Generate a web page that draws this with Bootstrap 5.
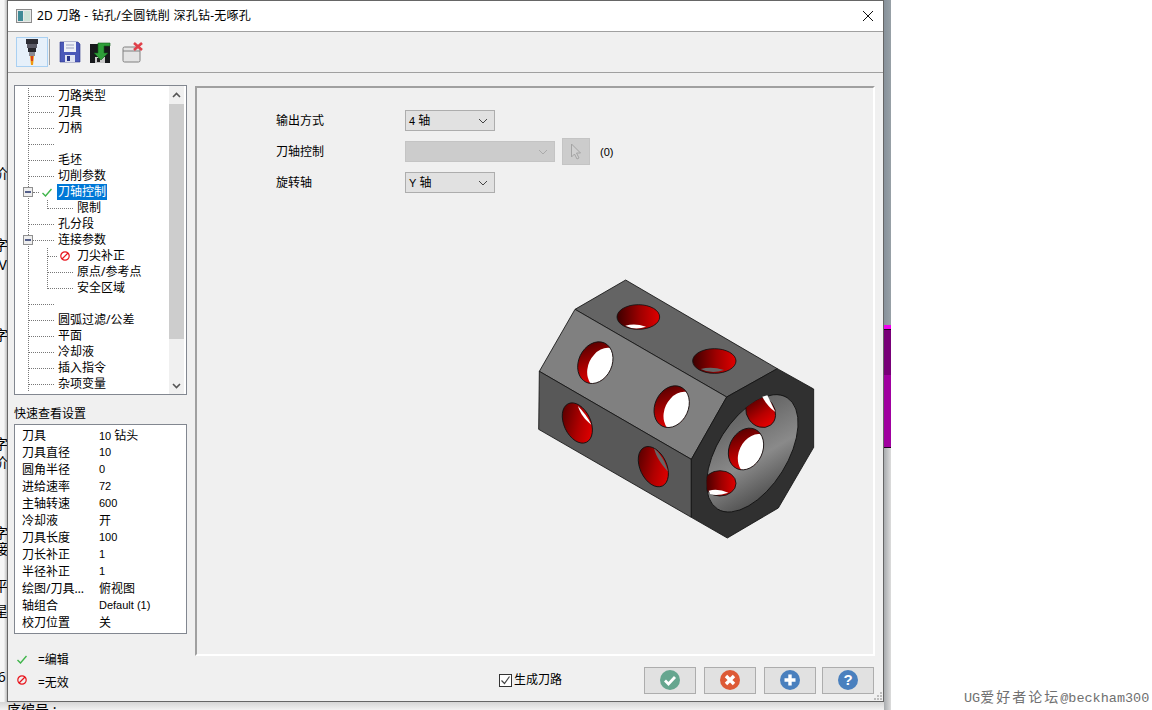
<!DOCTYPE html>
<html lang="zh">
<head>
  <meta charset="UTF-8"/>
  <meta name="viewport" content="width=device-width, initial-scale=1.0"/>
  <title>2D 刀路</title>
  <link href="https://cdn.jsdelivr.net/npm/bootstrap@5.3.0/dist/css/bootstrap.min.css" rel="stylesheet"/>
  <style>
    html, body { height: 710px; overflow: hidden; }
    body { background: #fff; font: 12px/16px "Noto Sans", "Noto Sans CJK SC", sans-serif; color: #000; position: relative; }
    .lat { font: 11px/16px "Liberation Sans", sans-serif; }

    /* desktop behind the dialog */
    .desk-left { position: absolute; left: 0; top: 0; width: 7px; height: 710px; background: linear-gradient(to right, #f6f6f6 55%, #bdbdbd); overflow: hidden; }
    .desk-left span { position: absolute; left: -6px; font-size: 14px; }
    .desk-bottom { position: absolute; left: 0; top: 702px; width: 891px; height: 8px; background: linear-gradient(#d6d6d6, #f2f2f2); overflow: hidden; }
    .desk-bottom span { position: absolute; left: 7px; top: 0; font-size: 14px; }
    .desk-right { position: absolute; left: 884px; top: 0; width: 7px; height: 710px; display: flex; flex-direction: column; }
    .strip-top { height: 325px; background: linear-gradient(to right, #87919a, #98a1a7); }
    .strip-a { height: 5px; background: #f000f0; border-bottom: 1px solid #200020; }
    .strip-b { height: 45px; background: #780078; }
    .strip-c { height: 73px; background: #a000a0; border-bottom: 1px solid #200020; }
    .strip-bot { flex: 1; background: linear-gradient(to right, #a8abae, #dcdcdc); }
    .watermark { position: absolute; left: 964px; top: 690px; font: 13.5px/16px "Liberation Mono", "Noto Sans CJK SC", monospace; color: #707070; white-space: nowrap; }
    .watermark span { font-size: 14px; letter-spacing: 2px; }

    /* dialog window */
    .dlg { position: absolute; left: 7px; top: 0; width: 877px; height: 702px; background: #f0f0f0; border: 1px solid #666; display: flex; flex-direction: column; }
    .dlg-title { height: 30px; background: #fff; padding-left: 8px; padding-right: 9px; flex: none; }
    .dlg-title-ico { margin-right: 5px; }
    .dlg-title-txt { letter-spacing: .25px; }
    .dlg-tools { height: 42px; flex: none; border-top: 1px solid #a0a0a0; border-bottom: 1px solid #a0a0a0; padding-left: 8px; }
    .tool-on { width: 32px; height: 30px; background: #e6f0fa; border: 1px solid #a9d0f2; }
    .tool-sep { width: 1px; height: 26px; background: #a0a0a0; margin-left: 1px; }
    .tool-save { margin-left: 9px; }
    .tool-load { margin-left: 8px; }
    .tool-del { margin-left: 9px; }
    .dlg-main { flex: 1; padding: 12px 9px 0 6px; gap: 8px; min-height: 0; }
    .side { width: 173px; flex: none; }

    .tree-box { height: 310px; border: 1px solid #828790; background: #fff; }
    .tree-list { flex: 1; padding-top: 2px; }
    .tree-row { height: 16px; padding-left: 13px; white-space: nowrap; background: linear-gradient(#777 50%, transparent 50%) 13px 0 / 1px 2px repeat-y; }
    .tree-box-row { padding-left: 8px; }
    .tree-sub { padding-left: 32px; }
    .sub-full { background: linear-gradient(#777 50%, transparent 50%) 13px 0 / 1px 2px repeat-y, linear-gradient(#777 50%, transparent 50%) 32px 0 / 1px 2px repeat-y; }
    .sub-half { background: linear-gradient(#777 50%, transparent 50%) 13px 0 / 1px 2px repeat-y, linear-gradient(#777 50%, transparent 50%) 32px 0 / 1px 2px no-repeat, linear-gradient(#777 50%, transparent 50%) 32px 2px / 1px 2px no-repeat, linear-gradient(#777 50%, transparent 50%) 32px 4px / 1px 2px no-repeat, linear-gradient(#777 50%, transparent 50%) 32px 6px / 1px 2px no-repeat; }
    .tree-dash { height: 0; flex: none; border-top: 1px dotted #777; }
    .dash-26 { width: 26px; margin-right: 4px; }
    .dash-sub { width: 26px; margin-right: 4px; }
    .dash-5 { width: 6px; margin-right: 3px; }
    .dash-21 { width: 21px; margin-right: 4px; }
    .dash-10 { width: 10px; margin-right: 3px; }
    .tree-minus { width: 10px; height: 10px; flex: none; background: #eee; border: 1px solid #8f8f8f; position: relative; }
    .tree-minus::after { content: ""; position: absolute; left: 1px; top: 3px; width: 6px; height: 2px; background: #55608a; }
    .tree-sel { background: #0078d7; color: #fff; padding: 0 1px; margin-left: 5px; }
    .ico-gap { margin-right: 7px; flex: none; }

    .scroll-col { width: 15px; flex: none; background: #f0f0f0; margin-right: 2px; }
    .scroll-btn { height: 17px; flex: none; }
    .scroll-thumb { height: 235px; background: #cdcdcd; flex: none; margin-top: 1px; }
    .scroll-rest { flex: 1; }

    .quick-title { margin-top: 11px; margin-bottom: 2px; height: 16px; }
    .quick-box { height: 210px; border: 1px solid #828790; background: #fff; padding: 2px 0 0 7px; }
    .quick-row { height: 17px; line-height: 17px; white-space: nowrap; }
    .quick-key { width: 77px; flex: none; }
    .legend-row { height: 23px; padding-left: 3px; gap: 11px; }
    .legend-wrap { margin-top: 14px; }
    .legend-bad { margin-top: -6px; }

    .panel { width: 680px; height: 570px; flex: none; border: 2px solid #fff; border-top-color: #a0a0a0; border-left-color: #a0a0a0; margin-top: 1px; padding: 17px 0 0 79px; }
    .field { height: 31px; }
    .field-label { width: 129px; flex: none; }
    .combo { height: 21px; border: 1px solid #adadad; background: #e1e1e1; padding: 0 6px 0 3px; flex: none; }
    .combo-s { width: 90px; }
    .combo-l { width: 150px; background: #ccc; border-color: #c4c4c4; }
    .pick-btn { width: 28px; height: 27px; margin-left: 7px; margin-right: 10px; background: #ccc; border: 1px solid #c4c4c4; flex: none; }
    .part-view { display: block; margin: 72px 0 0 244px; }

    .dlg-foot { height: 45px; flex: none; padding: 3px 9px 0 0; }
    .gen-check { width: 13px; height: 13px; border: 1px solid #333; background: #fff; margin-left: 491px; margin-right: 2px; flex: none; }
    .foot-btns { margin-left: auto; gap: 8px; }
    .act-btn { width: 52px; height: 27px; background: #e1e1e1; border: 1px solid #adadad; }
    .act-help { margin-left: -2px; }
    .grip { position: absolute; right: 1px; bottom: 1px; }
  </style>
</head>
<body>

<!-- what lies behind the dialog -->
<div class="desk-left">
  <span style="top:165px">价</span>
  <span style="top:205px">·</span>
  <span style="top:237px">字</span>
  <span style="top:257px">[V</span>
  <span style="top:295px">·</span>
  <span style="top:327px">字</span>
  <span style="top:393px">·</span>
  <span style="top:436px">字</span>
  <span style="top:454px">价</span>
  <span style="top:525px">字</span>
  <span style="top:541px">接</span>
  <span style="top:578px">平</span>
  <span style="top:603px">星</span>
  <span style="top:625px">:</span>
  <span style="top:669px">&nbsp;6</span>
</div>
<div class="desk-bottom"><span>序编号 :</span></div>
<div class="desk-right">
  <div class="strip-top"></div>
  <div class="strip-a"></div>
  <div class="strip-b"></div>
  <div class="strip-c"></div>
  <div class="strip-bot"></div>
</div>
<div class="watermark">UG<span>爱好者论坛</span>@beckham300</div>

<div class="dlg">
  <!-- title -->
  <div class="dlg-title d-flex align-items-center">
    <svg class="dlg-title-ico" width="16" height="14" viewBox="0 0 16 14"><rect x=".5" y=".5" width="15" height="13" fill="#e8e8e8" stroke="#8a8a8a"/><rect x="2" y="2" width="5" height="10" fill="#3f8a96"/><rect x="8" y="2" width="6" height="10" fill="#cfe3d8"/></svg>
    <span class="dlg-title-txt">2D 刀路 - 钻孔/全圆铣削 深孔钻-无啄孔</span>
    <svg class="ms-auto" width="12" height="12" viewBox="0 0 12 12"><path d="M1 1l10 10M11 1L1 11" stroke="#111" fill="none"/></svg>
  </div>

  <!-- toolbar -->
  <div class="dlg-tools d-flex align-items-center">
    <div class="tool-on d-flex align-items-center justify-content-center">
      <svg width="14" height="26" viewBox="0 0 14 26"><rect x="1" y="0" width="12" height="5" fill="#2c2c34"/><rect x="2" y="5" width="10" height="4" fill="#5a5a66"/><rect x="3" y="9" width="8" height="4" fill="#26262c"/><rect x="4" y="13" width="6" height="4" fill="#8a8a92"/><path d="M5 17h4l-1 9h-2z" fill="#f09a10"/><path d="M6 17h2v5h-2z" fill="#d8401a"/></svg>
    </div>
    <div class="tool-sep"></div>
    <svg class="tool-save" width="22" height="22" viewBox="0 0 22 22"><path d="M1 1h18l2 2v18H1z" fill="#4a58b8" stroke="#2a3488" stroke-width=".6"/><rect x="5" y="1" width="12" height="10" fill="#eef0f6"/><path d="M7 4h8M7 7h8" stroke="#9aa0c0"/><rect x="6" y="14" width="10" height="7" fill="#dfe3f2"/><rect x="8" y="15" width="3" height="5" fill="#2a3488"/></svg>
    <svg class="tool-load" width="24" height="24" viewBox="0 0 24 24"><rect x="1" y="4" width="20" height="19" fill="#17191c"/><rect x="6" y="17" width="10" height="6" fill="#c8c8c8"/><rect x="8" y="18" width="3" height="4" fill="#222"/><path d="M9 3h12v3H15v7h4l-7 7-7-7h4z" fill="#2f9e3a" stroke="#0e5e18" stroke-width=".6"/></svg>
    <svg class="tool-del" width="22" height="22" viewBox="0 0 22 22"><rect x="1" y="6" width="17" height="15" rx="1.5" fill="#e4e4e4" stroke="#808080"/><path d="M1 10h17" stroke="#808080"/><path d="M12 2l8 7M20 2l-8 7" stroke="#e0404a" stroke-width="2.6"/></svg>
  </div>

  <!-- main -->
  <div class="dlg-main d-flex">
    <div class="side">
      <div class="tree-box d-flex">
        <div class="tree-list">
          <div class="tree-row d-flex align-items-center"><span class="tree-dash dash-26"></span>刀路类型</div>
          <div class="tree-row d-flex align-items-center"><span class="tree-dash dash-26"></span>刀具</div>
          <div class="tree-row d-flex align-items-center"><span class="tree-dash dash-26"></span>刀柄</div>
          <div class="tree-row d-flex align-items-center"><span class="tree-dash dash-26"></span></div>
          <div class="tree-row d-flex align-items-center"><span class="tree-dash dash-26"></span>毛坯</div>
          <div class="tree-row d-flex align-items-center"><span class="tree-dash dash-26"></span>切削参数</div>
          <div class="tree-row tree-box-row d-flex align-items-center">
            <span class="tree-minus"></span><span class="tree-dash dash-5"></span>
            <svg width="10" height="9" viewBox="0 0 10 9"><path d="M.5 5l3 3 6-7" fill="none" stroke="#3fb54a" stroke-width="1.4"/></svg>
            <span class="tree-sel">刀轴控制</span>
          </div>
          <div class="tree-row tree-sub sub-half d-flex align-items-center"><span class="tree-dash dash-sub"></span>限制</div>
          <div class="tree-row d-flex align-items-center"><span class="tree-dash dash-26"></span>孔分段</div>
          <div class="tree-row tree-box-row d-flex align-items-center"><span class="tree-minus"></span><span class="tree-dash dash-21"></span>连接参数</div>
          <div class="tree-row tree-sub sub-full d-flex align-items-center">
            <span class="tree-dash dash-10"></span>
            <svg class="ico-gap" width="10" height="10" viewBox="0 0 10 10"><circle cx="5" cy="5" r="4.2" fill="none" stroke="#e8141c" stroke-width="1.2"/><path d="M2 8l6-6" stroke="#e8141c" stroke-width="1.2"/></svg>
            刀尖补正
          </div>
          <div class="tree-row tree-sub sub-full d-flex align-items-center"><span class="tree-dash dash-sub"></span>原点/参考点</div>
          <div class="tree-row tree-sub sub-half d-flex align-items-center"><span class="tree-dash dash-sub"></span>安全区域</div>
          <div class="tree-row d-flex align-items-center"><span class="tree-dash dash-26"></span></div>
          <div class="tree-row d-flex align-items-center"><span class="tree-dash dash-26"></span>圆弧过滤/公差</div>
          <div class="tree-row d-flex align-items-center"><span class="tree-dash dash-26"></span>平面</div>
          <div class="tree-row d-flex align-items-center"><span class="tree-dash dash-26"></span>冷却液</div>
          <div class="tree-row d-flex align-items-center"><span class="tree-dash dash-26"></span>插入指令</div>
          <div class="tree-row d-flex align-items-center"><span class="tree-dash dash-26"></span>杂项变量</div>
        </div>
        <div class="scroll-col d-flex flex-column">
          <div class="scroll-btn d-flex align-items-center justify-content-center"><svg width="9" height="6" viewBox="0 0 9 6"><path d="M1 5l3.500-3.500L8 5" fill="none" stroke="#555" stroke-width="1.600"/></svg></div>
          <div class="scroll-thumb"></div>
          <div class="scroll-rest"></div>
          <div class="scroll-btn d-flex align-items-center justify-content-center"><svg width="9" height="6" viewBox="0 0 9 6"><path d="M1 1l3.500 3.500L8 1" fill="none" stroke="#555" stroke-width="1.600"/></svg></div>
        </div>
      </div>

      <div class="quick-title">快速查看设置</div>
      <div class="quick-box">
        <div class="quick-row d-flex"><span class="quick-key">刀具</span><span><span class="lat">10</span> 钻头</span></div>
        <div class="quick-row d-flex"><span class="quick-key">刀具直径</span><span class="lat">10</span></div>
        <div class="quick-row d-flex"><span class="quick-key">圆角半径</span><span class="lat">0</span></div>
        <div class="quick-row d-flex"><span class="quick-key">进给速率</span><span class="lat">72</span></div>
        <div class="quick-row d-flex"><span class="quick-key">主轴转速</span><span class="lat">600</span></div>
        <div class="quick-row d-flex"><span class="quick-key">冷却液</span><span>开</span></div>
        <div class="quick-row d-flex"><span class="quick-key">刀具长度</span><span class="lat">100</span></div>
        <div class="quick-row d-flex"><span class="quick-key">刀长补正</span><span class="lat">1</span></div>
        <div class="quick-row d-flex"><span class="quick-key">半径补正</span><span class="lat">1</span></div>
        <div class="quick-row d-flex"><span class="quick-key">绘图/刀具…</span><span>俯视图</span></div>
        <div class="quick-row d-flex"><span class="quick-key">轴组合</span><span class="lat">Default (1)</span></div>
        <div class="quick-row d-flex"><span class="quick-key">校刀位置</span><span>关</span></div>
      </div>

      <div class="legend-wrap">
        <div class="legend-row d-flex align-items-center">
          <svg width="10" height="9" viewBox="0 0 10 9"><path d="M.5 5l3 3 6-7" fill="none" stroke="#3fb54a" stroke-width="1.4"/></svg>
          <span>=编辑</span>
        </div>
        <div class="legend-row d-flex align-items-center">
          <svg class="legend-bad" width="10" height="10" viewBox="0 0 10 10"><circle cx="5" cy="5" r="4.2" fill="none" stroke="#e8141c" stroke-width="1.2"/><path d="M2 8l6-6" stroke="#e8141c" stroke-width="1.2"/></svg>
          <span>=无效</span>
        </div>
      </div>
    </div>

    <!-- right panel -->
    <div class="panel">
      <div class="field d-flex align-items-center">
        <span class="field-label">输出方式</span>
        <div class="combo combo-s d-flex align-items-center justify-content-between"><span><span class="lat">4</span> 轴</span><svg width="10" height="6" viewBox="0 0 10 6"><path d="M1 1l4 4 4-4" fill="none" stroke="#444"/></svg></div>
      </div>
      <div class="field d-flex align-items-center">
        <span class="field-label">刀轴控制</span>
        <div class="combo combo-l d-flex align-items-center justify-content-end"><svg width="10" height="6" viewBox="0 0 10 6"><path d="M1 1l4 4 4-4" fill="none" stroke="#aaa"/></svg></div>
        <div class="pick-btn d-flex align-items-center justify-content-center"><svg width="12" height="18" viewBox="0 0 12 18"><path d="M1.500 1v13l3-3 2.500 5 2-1-2.500-5h4z" fill="#d0d0d0" stroke="#a4a4a4"/></svg></div>
        <span class="lat">(0)</span>
      </div>
      <div class="field d-flex align-items-center">
        <span class="field-label">旋转轴</span>
        <div class="combo combo-s d-flex align-items-center justify-content-between"><span><span class="lat">Y</span> 轴</span><svg width="10" height="6" viewBox="0 0 10 6"><path d="M1 1l4 4 4-4" fill="none" stroke="#444"/></svg></div>
      </div>

      <svg class="part-view" width="310" height="280" viewBox="0 0 930 840">
        <defs>
          <linearGradient id="redH" x1="0" x2="1" y1="0" y2="0"><stop offset="0" stop-color="#3c0000"/><stop offset=".55" stop-color="#a00000"/><stop offset="1" stop-color="#e00000"/></linearGradient>
          <linearGradient id="redV" x1="0" x2="0" y1="0" y2="1"><stop offset="0" stop-color="#500000"/><stop offset=".6" stop-color="#b80000"/><stop offset="1" stop-color="#e80000"/></linearGradient>
          <linearGradient id="redD" x1="0" x2=".8" y1="0" y2="1"><stop offset="0" stop-color="#400000"/><stop offset=".6" stop-color="#b00000"/><stop offset="1" stop-color="#e80000"/></linearGradient>
          <linearGradient id="bore" x1="0" x2="1" y1="1" y2="0"><stop offset="0" stop-color="#3a3a3a"/><stop offset=".45" stop-color="#8a8a8a"/><stop offset=".75" stop-color="#6c6c6c"/><stop offset="1" stop-color="#5a5a5a"/></linearGradient>
          <clipPath id="boreClip"><ellipse cx="697" cy="550" rx="197" ry="105" transform="rotate(-58 697 550)"/></clipPath>
          <clipPath id="midClip"><ellipse cx="226" cy="278" rx="50" ry="65" transform="rotate(25 226 278)"/></clipPath>
          <g id="midHole">
            <ellipse cx="226" cy="278" rx="50" ry="65" transform="rotate(25 226 278)" fill="url(#redD)"/>
            <g clip-path="url(#midClip)"><ellipse cx="256" cy="296" rx="52" ry="65" transform="rotate(25 256 296)" fill="#fff"/></g>
            <ellipse cx="226" cy="278" rx="50" ry="65" transform="rotate(25 226 278)" fill="none" stroke="#111" stroke-width="2.5"/>
          </g>
          <g id="lowHole">
            <ellipse cx="172" cy="459" rx="40" ry="64" transform="rotate(-25 172 459)" fill="url(#redD)" stroke="#111" stroke-width="2.5"/>
          </g>
        </defs>
        <g stroke="#111" stroke-width="2.5" stroke-linejoin="round">
          <path d="M165 118L317 30 772 296 620 381z" fill="#646464"/>
          <path d="M165 118L620 381 514 568 58 304z" fill="#808080"/>
          <path d="M58 304L514 568V742L56 478z" fill="#585858"/>
          <path d="M620 381L772 296 881 357V532L775 714 622 804 514 742V568z" fill="#303030"/>
          <ellipse cx="697" cy="550" rx="197" ry="105" transform="rotate(-58 697 550)" fill="url(#bore)"/>
          <!-- holes on top face -->
          <ellipse cx="355" cy="141" rx="64" ry="37" fill="url(#redH)"/>
          <ellipse cx="583" cy="273" rx="65" ry="37" fill="url(#redH)"/>
        </g>
        <use href="#midHole"/>
        <use href="#midHole" x="229" y="132"/>
        <use href="#lowHole"/>
        <use href="#lowHole" x="228" y="131"/>
        <!-- see-through parts of the holes -->
        <path d="M174 408C190 425 205 445 214 464 195 450 180 430 174 408z" fill="#fff"/>
        <path d="M402 535C420 550 436 575 444 605 425 585 408 560 402 535z" fill="#666"/>
        <path d="M316 167Q345 158 378 170 345 182 316 167z" fill="#fff"/>
        <path d="M542 297Q575 288 612 300 575 314 542 297z" fill="#666"/>
        <g clip-path="url(#boreClip)" stroke="#111" stroke-width="2.5">
          <ellipse cx="722" cy="425" rx="42" ry="50" transform="rotate(-35 722 425)" fill="url(#redV)"/>
          <ellipse cx="600" cy="640" rx="48" ry="38" fill="url(#redH)"/>
        </g>
        <use href="#midHole" x="452" y="259"/>
        <path d="M727 380L742 376 766 426C745 410 735 395 727 380z" fill="#fff"/>
        <path d="M566 662Q595 655 625 668 590 680 570 672z" fill="#fff"/>
      </svg>
    </div>
  </div>

  <!-- footer -->
  <div class="dlg-foot d-flex align-items-center">
    <span class="gen-check d-flex align-items-center justify-content-center"><svg width="11" height="11" viewBox="0 0 11 11"><path d="M1.500 5.500l3 3 5-7" fill="none" stroke="#444" stroke-width="1.200"/></svg></span>
    <span>生成刀路</span>
    <div class="foot-btns d-flex">
      <div class="act-btn d-flex align-items-center justify-content-center">
        <svg width="20" height="20" viewBox="0 0 20 20"><circle cx="10" cy="10" r="10" fill="#66a68f"/><path d="M5 10.500l3.500 3.500L15 7" fill="none" stroke="#fff" stroke-width="2.800"/></svg>
      </div>
      <div class="act-btn d-flex align-items-center justify-content-center">
        <svg width="20" height="20" viewBox="0 0 20 20"><circle cx="10" cy="10" r="10" fill="#dd5a36"/><path d="M6 6l8 8M14 6l-8 8" stroke="#fff" stroke-width="3.400"/></svg>
      </div>
      <div class="act-btn d-flex align-items-center justify-content-center">
        <svg width="20" height="20" viewBox="0 0 20 20"><circle cx="10" cy="10" r="10" fill="#4a80be"/><path d="M10 4.500v11M4.500 10h11" stroke="#fff" stroke-width="3.400"/></svg>
      </div>
      <div class="act-btn act-help d-flex align-items-center justify-content-center">
        <svg width="20" height="20" viewBox="0 0 20 20"><circle cx="10" cy="10" r="10" fill="#4a80be"/><text x="10" y="15" text-anchor="middle" font-family="Liberation Sans" font-weight="700" font-size="15" fill="#fff">?</text></svg>
      </div>
    </div>
  </div>
  <svg class="grip" width="9" height="9" viewBox="0 0 9 9"><path d="M7 1h2v2H7zM4 4h2v2H4zM7 4h2v2H7zM1 7h2v2H1zM4 7h2v2H4zM7 7h2v2H7z" fill="#bdbdbd"/></svg>
</div>

</body>
</html>
